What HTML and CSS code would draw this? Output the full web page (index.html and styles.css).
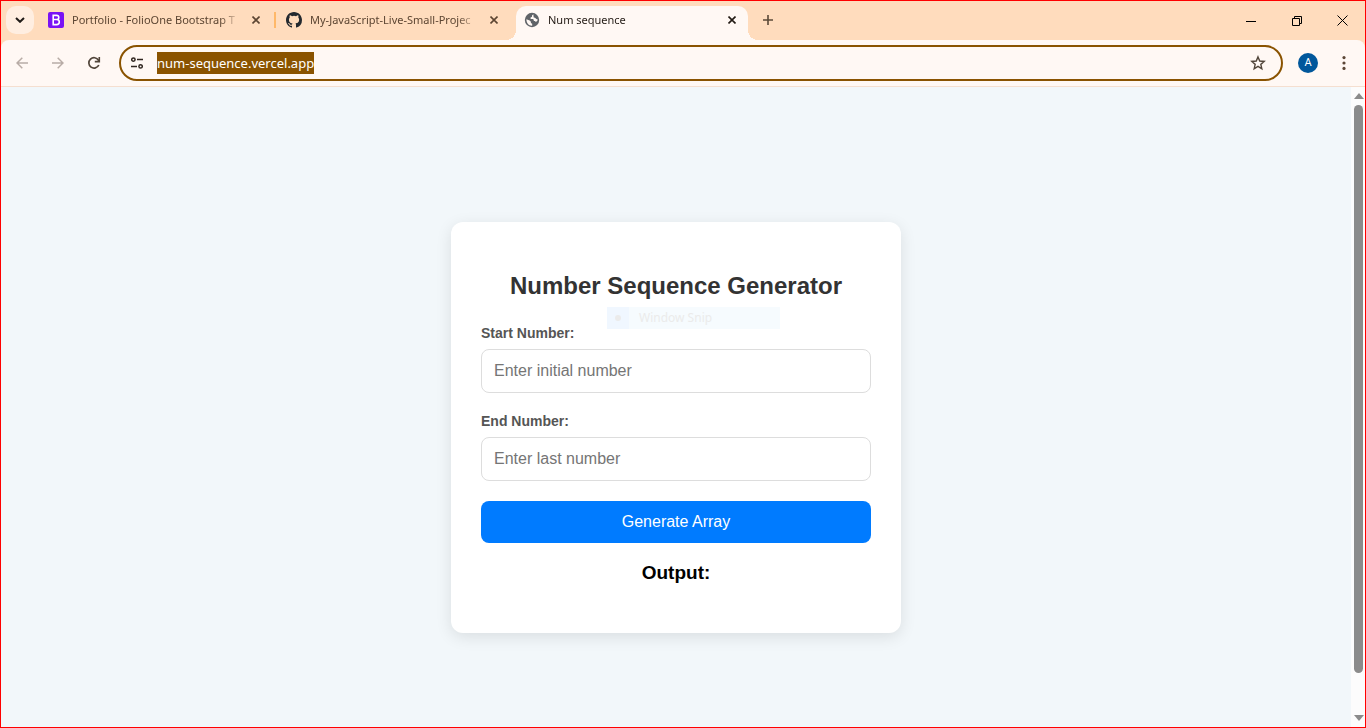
FILE: index.html
```html
<!DOCTYPE html>
<html lang="en">
<head>
<meta charset="utf-8">
<title>Num sequence</title>
<link rel="stylesheet" href="styles.css">
</head>
<body>
<div class="window">
  <header class="titlebar">
    <button class="tab-search" type="button" aria-label="Search tabs">
      <svg width="10" height="6" viewBox="0 0 10 6"><path d="M1 1l4 3.8L9 1" fill="none" stroke="#1f1a17" stroke-width="2"/></svg>
    </button>
    <div class="tabs">
      <div class="tab tab-divided">
        <svg class="favicon" width="16" height="16" viewBox="0 0 16 16"><rect width="16" height="16" rx="2" fill="#7a12f5"/><path d="M5.200 3.400h3.300c1.500 0 2.300.7 2.300 2.100 0 1.300-.8 2-2.300 2H5.200h3.500c1.700 0 2.600.9 2.600 2.500s-1 2.600-2.700 2.600H5.200z" fill="none" stroke="#fff" stroke-width="1.600"/></svg>
        <span class="tab-title">Portfolio - FolioOne Bootstrap T</span>
        <button class="tab-close" type="button" aria-label="Close tab"><svg width="8" height="8" viewBox="0 0 8 8"><path d="M.5.5l7 7M7.500.5l-7 7" stroke="currentColor" stroke-width="1.600"/></svg></button>
      </div>
      <div class="tab">
        <svg class="favicon" width="16" height="16" viewBox="0 0 16 16"><path fill="#24292f" d="M8 0C3.580 0 0 3.580 0 8c0 3.540 2.290 6.530 5.470 7.590.4.070.55-.17.55-.38 0-.19-.01-.82-.01-1.490-2.010.37-2.530-.49-2.690-.94-.09-.23-.48-.94-.82-1.130-.28-.15-.68-.52-.01-.53.63-.01 1.080.58 1.230.82.72 1.210 1.870.87 2.330.66.07-.52.28-.87.51-1.070-1.780-.2-3.640-.89-3.640-3.950 0-.87.31-1.590.82-2.150-.08-.2-.36-1.020.08-2.120 0 0 .67-.21 2.200.82a7.600 7.600 0 0 1 4 0c1.530-1.040 2.200-.82 2.200-.82.44 1.100.16 1.920.08 2.120.51.56.82 1.270.82 2.150 0 3.070-1.870 3.750-3.650 3.950.29.25.54.73.54 1.480 0 1.070-.01 1.930-.01 2.200 0 .21.15.46.55.38A8.010 8.010 0 0 0 16 8c0-4.420-3.580-8-8-8z"/></svg>
        <span class="tab-title">My-JavaScript-Live-Small-Projec</span>
        <button class="tab-close" type="button" aria-label="Close tab"><svg width="8" height="8" viewBox="0 0 8 8"><path d="M.5.5l7 7M7.500.5l-7 7" stroke="currentColor" stroke-width="1.600"/></svg></button>
      </div>
      <div class="tab tab-active">
        <svg class="favicon" width="16" height="16" viewBox="0 0 16 16"><circle cx="8" cy="8" r="7.200" fill="#5f6368"/><path d="M9.300 2.300L8 3.600v1.200L6.600 5.600v1.300h2.200l1 .9v1.300h1.200l.8.8c1-.4 1.700-.9 1.900-2.400L12.300 7 11 5.700 9.700 5.500zM2.400 7.300L5.700 8.600l1.200 1.100v1.200l1.300.9v1.900C5 13.900 2.500 11.500 2.400 7.300z" fill="#fff8f4"/></svg>
        <span class="tab-title">Num sequence</span>
        <button class="tab-close" type="button" aria-label="Close tab"><svg width="8" height="8" viewBox="0 0 8 8"><path d="M.5.5l7 7M7.500.5l-7 7" stroke="currentColor" stroke-width="1.600"/></svg></button>
      </div>
    </div>
    <button class="new-tab" type="button" aria-label="New tab"><svg width="10" height="10" viewBox="0 0 10 10"><path d="M5 0v10M0 5h10" stroke="#5c4a38" stroke-width="1.600"/></svg></button>
    <div class="window-controls">
      <button type="button" aria-label="Minimize"><svg width="10" height="10" viewBox="0 0 10 10"><path d="M0 5.500h10" stroke="#000"/></svg></button>
      <button type="button" aria-label="Restore"><svg width="10" height="10" viewBox="0 0 10 10"><path d="M.5 2.500h7v7h-7zM2.500 2.500v-2h7v7h-2" fill="none" stroke="#000"/></svg></button>
      <button type="button" aria-label="Close"><svg width="11" height="11" viewBox="0 0 11 11"><path d="M.5.5l10 10M10.500.5l-10 10" stroke="#000"/></svg></button>
    </div>
  </header>

  <nav class="toolbar">
    <button class="tool" type="button" aria-label="Back" disabled><svg width="12" height="12" viewBox="0 0 12 12"><path d="M12 6H1M6.300.7L1 6l5.300 5.300" fill="none" stroke="#b8aca6" stroke-width="1.500"/></svg></button>
    <button class="tool" type="button" aria-label="Forward" disabled><svg width="12" height="12" viewBox="0 0 12 12"><path d="M0 6h11M5.700.7L11 6l-5.300 5.300" fill="none" stroke="#b8aca6" stroke-width="1.500"/></svg></button>
    <button class="tool" type="button" aria-label="Reload"><svg width="14" height="14" viewBox="0 0 14 14"><path d="M11.800 9A5.200 5.200 0 1 1 11.500 4.200L12.200 5.200" fill="none" stroke="#51453a" stroke-width="1.700"/><path d="M12.300 1v4.600H7.800" fill="none" stroke="#51453a" stroke-width="1.600"/></svg></button>
    <div class="omnibox">
      <button class="site-info" type="button" aria-label="View site information"><svg width="12" height="12" viewBox="0 0 12 12"><g fill="none" stroke="#302620" stroke-width="1.500"><circle cx="2.400" cy="2.600" r="1.700"/><path d="M6 2.600h6M0 9.400h6"/><circle cx="9.600" cy="9.400" r="1.700"/></g></svg></button>
      <input class="address" type="text" aria-label="Address" value="num-sequence.vercel.app" spellcheck="false">
      <button class="bookmark" type="button" aria-label="Bookmark this tab"><svg width="16" height="16" viewBox="0 0 16 16"><path d="M8 1.900l1.750 4.150 4.450.38-3.380 2.940 1.010 4.370L8 11.430l-3.830 2.310 1.010-4.370L1.800 6.430l4.450-.38z" fill="none" stroke="#51453a" stroke-width="1.400"/></svg></button>
    </div>
    <button class="tool" type="button" aria-label="Profile"><span class="avatar">A</span></button>
    <button class="tool" type="button" aria-label="Menu"><svg width="4" height="14" viewBox="0 0 4 14"><g fill="#5c4636"><circle cx="2" cy="1.600" r="1.600"/><circle cx="2" cy="7" r="1.600"/><circle cx="2" cy="12.400" r="1.600"/></g></svg></button>
  </nav>

  <div class="viewport">
    <main class="page">
      <form class="card">
        <h2 class="heading">Number Sequence Generator</h2>
        <label class="label" for="start">Start Number:</label>
        <input class="field" id="start" type="text" inputmode="numeric" placeholder="Enter initial number">
        <label class="label" for="end">End Number:</label>
        <input class="field" id="end" type="text" inputmode="numeric" placeholder="Enter last number">
        <button class="generate" type="button">Generate Array</button>
        <h3 class="output">Output:</h3>
        <div class="snip-menu"><span class="snip-mark"><span class="snip-dot"></span></span><span>Window Snip</span></div>
      </form>
    </main>
    <div class="scrollbar">
      <svg width="10" height="6" viewBox="0 0 10 6"><path d="M0 6L5 0l5 6z" fill="#8b8b8b"/></svg>
      <div class="thumb"></div>
      <svg width="10" height="6" viewBox="0 0 10 6"><path d="M0 0l5 6 5-6z" fill="#8b8b8b"/></svg>
    </div>
  </div>
</div>
</body>
</html>
```

FILE: styles.css
```css
* {
  box-sizing: border-box;
}

body {
  margin: 0;
}

button {
  display: flex;
  align-items: center;
  justify-content: center;
  padding: 0;
  border: 0;
  background: none;
}

.window {
  display: flex;
  flex-direction: column;
  height: 100vh;
  border: 1px solid #ff0000;
  background: #ffdcbd;
  font-family: "Noto Sans", sans-serif;
  font-size: 11px;
}

/* Tab strip */
.titlebar {
  display: flex;
  flex: none;
  align-items: stretch;
  height: 39px;
  padding-left: 5px;
}

.tab-search {
  width: 28px;
  height: 28px;
  margin: 5px 6px 0 0;
  border-radius: 10px;
  background: #ffeee1;
}

.tabs {
  display: flex;
  gap: 6px;
  padding-top: 5px;
}

.tab {
  position: relative;
  display: flex;
  align-items: center;
  width: 232px;
  padding: 0 8px 6px 8px;
  color: #5c4532;
}

.tab-divided::after {
  content: "";
  position: absolute;
  right: -4px;
  top: 6px;
  width: 2px;
  height: 16px;
  background: #ffb868;
}

.tab-active {
  border-radius: 10px 10px 0 0;
  background: #fff8f4;
  color: #221a14;
}

.tab-active::before,
.tab-active::after {
  content: "";
  position: absolute;
  bottom: 0;
  width: 10px;
  height: 10px;
}

.tab-active::before {
  right: 100%;
  background: radial-gradient(circle at 0 0, transparent 10px, #fff8f4 10px);
}

.tab-active::after {
  left: 100%;
  background: radial-gradient(circle at 100% 0, transparent 10px, #fff8f4 10px);
}

.favicon {
  flex: none;
  margin-right: 8px;
}

.tab-title {
  flex: 1;
  overflow: hidden;
  white-space: nowrap;
  line-height: 18px;
  -webkit-mask-image: linear-gradient(to right, #000 calc(100% - 20px), transparent);
  mask-image: linear-gradient(to right, #000 calc(100% - 20px), transparent);
}

.tab-close {
  width: 16px;
  height: 16px;
  margin-left: 8px;
  color: inherit;
}

.new-tab {
  width: 28px;
  height: 28px;
  margin: 5px 0 0 6px;
}

.window-controls {
  display: flex;
  margin-left: auto;
}

.window-controls button {
  width: 46px;
}

.window-controls button:last-child {
  width: 45px;
}

/* Toolbar */
.toolbar {
  display: flex;
  flex: none;
  align-items: center;
  gap: 2px;
  height: 47px;
  padding: 0 4px;
  border-bottom: 1px solid #f5dfd0;
  border-radius: 8px 8px 0 0;
  background: #fff8f4;
}

.tool {
  flex: none;
  width: 34px;
  height: 34px;
}

.omnibox {
  display: flex;
  flex: 1;
  align-items: center;
  height: 36px;
  margin: 0 6px;
  padding: 0 13px 0 6px;
  border: 2px solid #8a5300;
  border-radius: 18px;
}

.site-info {
  width: 20px;
  height: 24px;
  margin-right: 10px;
}

.address {
  field-sizing: content;
  height: 22px;
  padding: 0;
  border: 0;
  background: #8a5300;
  color: #ffffff;
  font-family: "Noto Sans", sans-serif;
  font-size: 13px;
}

.bookmark {
  width: 20px;
  height: 24px;
  margin-left: auto;
}

.avatar {
  width: 20px;
  height: 20px;
  border-radius: 50%;
  background: #01579b;
  color: #ffffff;
  font-family: Roboto, sans-serif;
  font-size: 11px;
  line-height: 20px;
}

/* Web page */
.viewport {
  display: flex;
  flex: 1;
  min-height: 0;
  background: #f2f7fa;
}

.page {
  display: flex;
  flex: 1;
  align-items: center;
  justify-content: center;
  padding-top: 40px;
  font-family: "Liberation Sans", Arial, sans-serif;
}

.card {
  position: relative;
  display: flex;
  flex-direction: column;
  width: 450px;
  padding: 50px 30px;
  border-radius: 12px;
  background: #ffffff;
  box-shadow: 0 4px 16px rgba(0, 0, 0, 0.1);
}

.heading {
  margin: 0 0 26px;
  color: #333333;
  font-size: 24px;
  line-height: 27px;
  text-align: center;
}

.label {
  margin-bottom: 8px;
  color: #555555;
  font-size: 14px;
  font-weight: bold;
  line-height: 16px;
}

.field {
  height: 44px;
  margin: 0 0 20px;
  padding: 12px;
  border: 1px solid #dddddd;
  border-radius: 8px;
  background: #ffffff;
  font-family: inherit;
  font-size: 16px;
}

.field::placeholder {
  color: #757575;
}

.generate {
  height: 42px;
  border-radius: 8px;
  background: #007bff;
  color: #ffffff;
  font-family: inherit;
  font-size: 16px;
}

.output {
  margin: 19px 0 0;
  color: #000000;
  font-size: 19px;
  line-height: 21px;
  text-align: center;
}

.snip-menu {
  position: absolute;
  left: 156px;
  top: 85px;
  display: flex;
  align-items: center;
  gap: 10px;
  width: 173px;
  height: 22px;
  background: #f6fbfe;
  color: #ebebeb;
  font-family: "Noto Sans", sans-serif;
  font-size: 12px;
}

.snip-mark {
  display: flex;
  align-items: center;
  justify-content: center;
  width: 22px;
  height: 22px;
  background: #f0f7ff;
}

.snip-dot {
  width: 6px;
  height: 6px;
  border-radius: 50%;
  background: #ebebeb;
}

.scrollbar {
  display: flex;
  flex: none;
  flex-direction: column;
  align-items: center;
  width: 14px;
  padding: 6px 0 6px 1px;
  background: #fcfcfc;
}

.thumb {
  flex: 1;
  width: 9px;
  margin: 6px 0 42px;
  border-radius: 5px;
  background: #8b8b8b;
}
```
